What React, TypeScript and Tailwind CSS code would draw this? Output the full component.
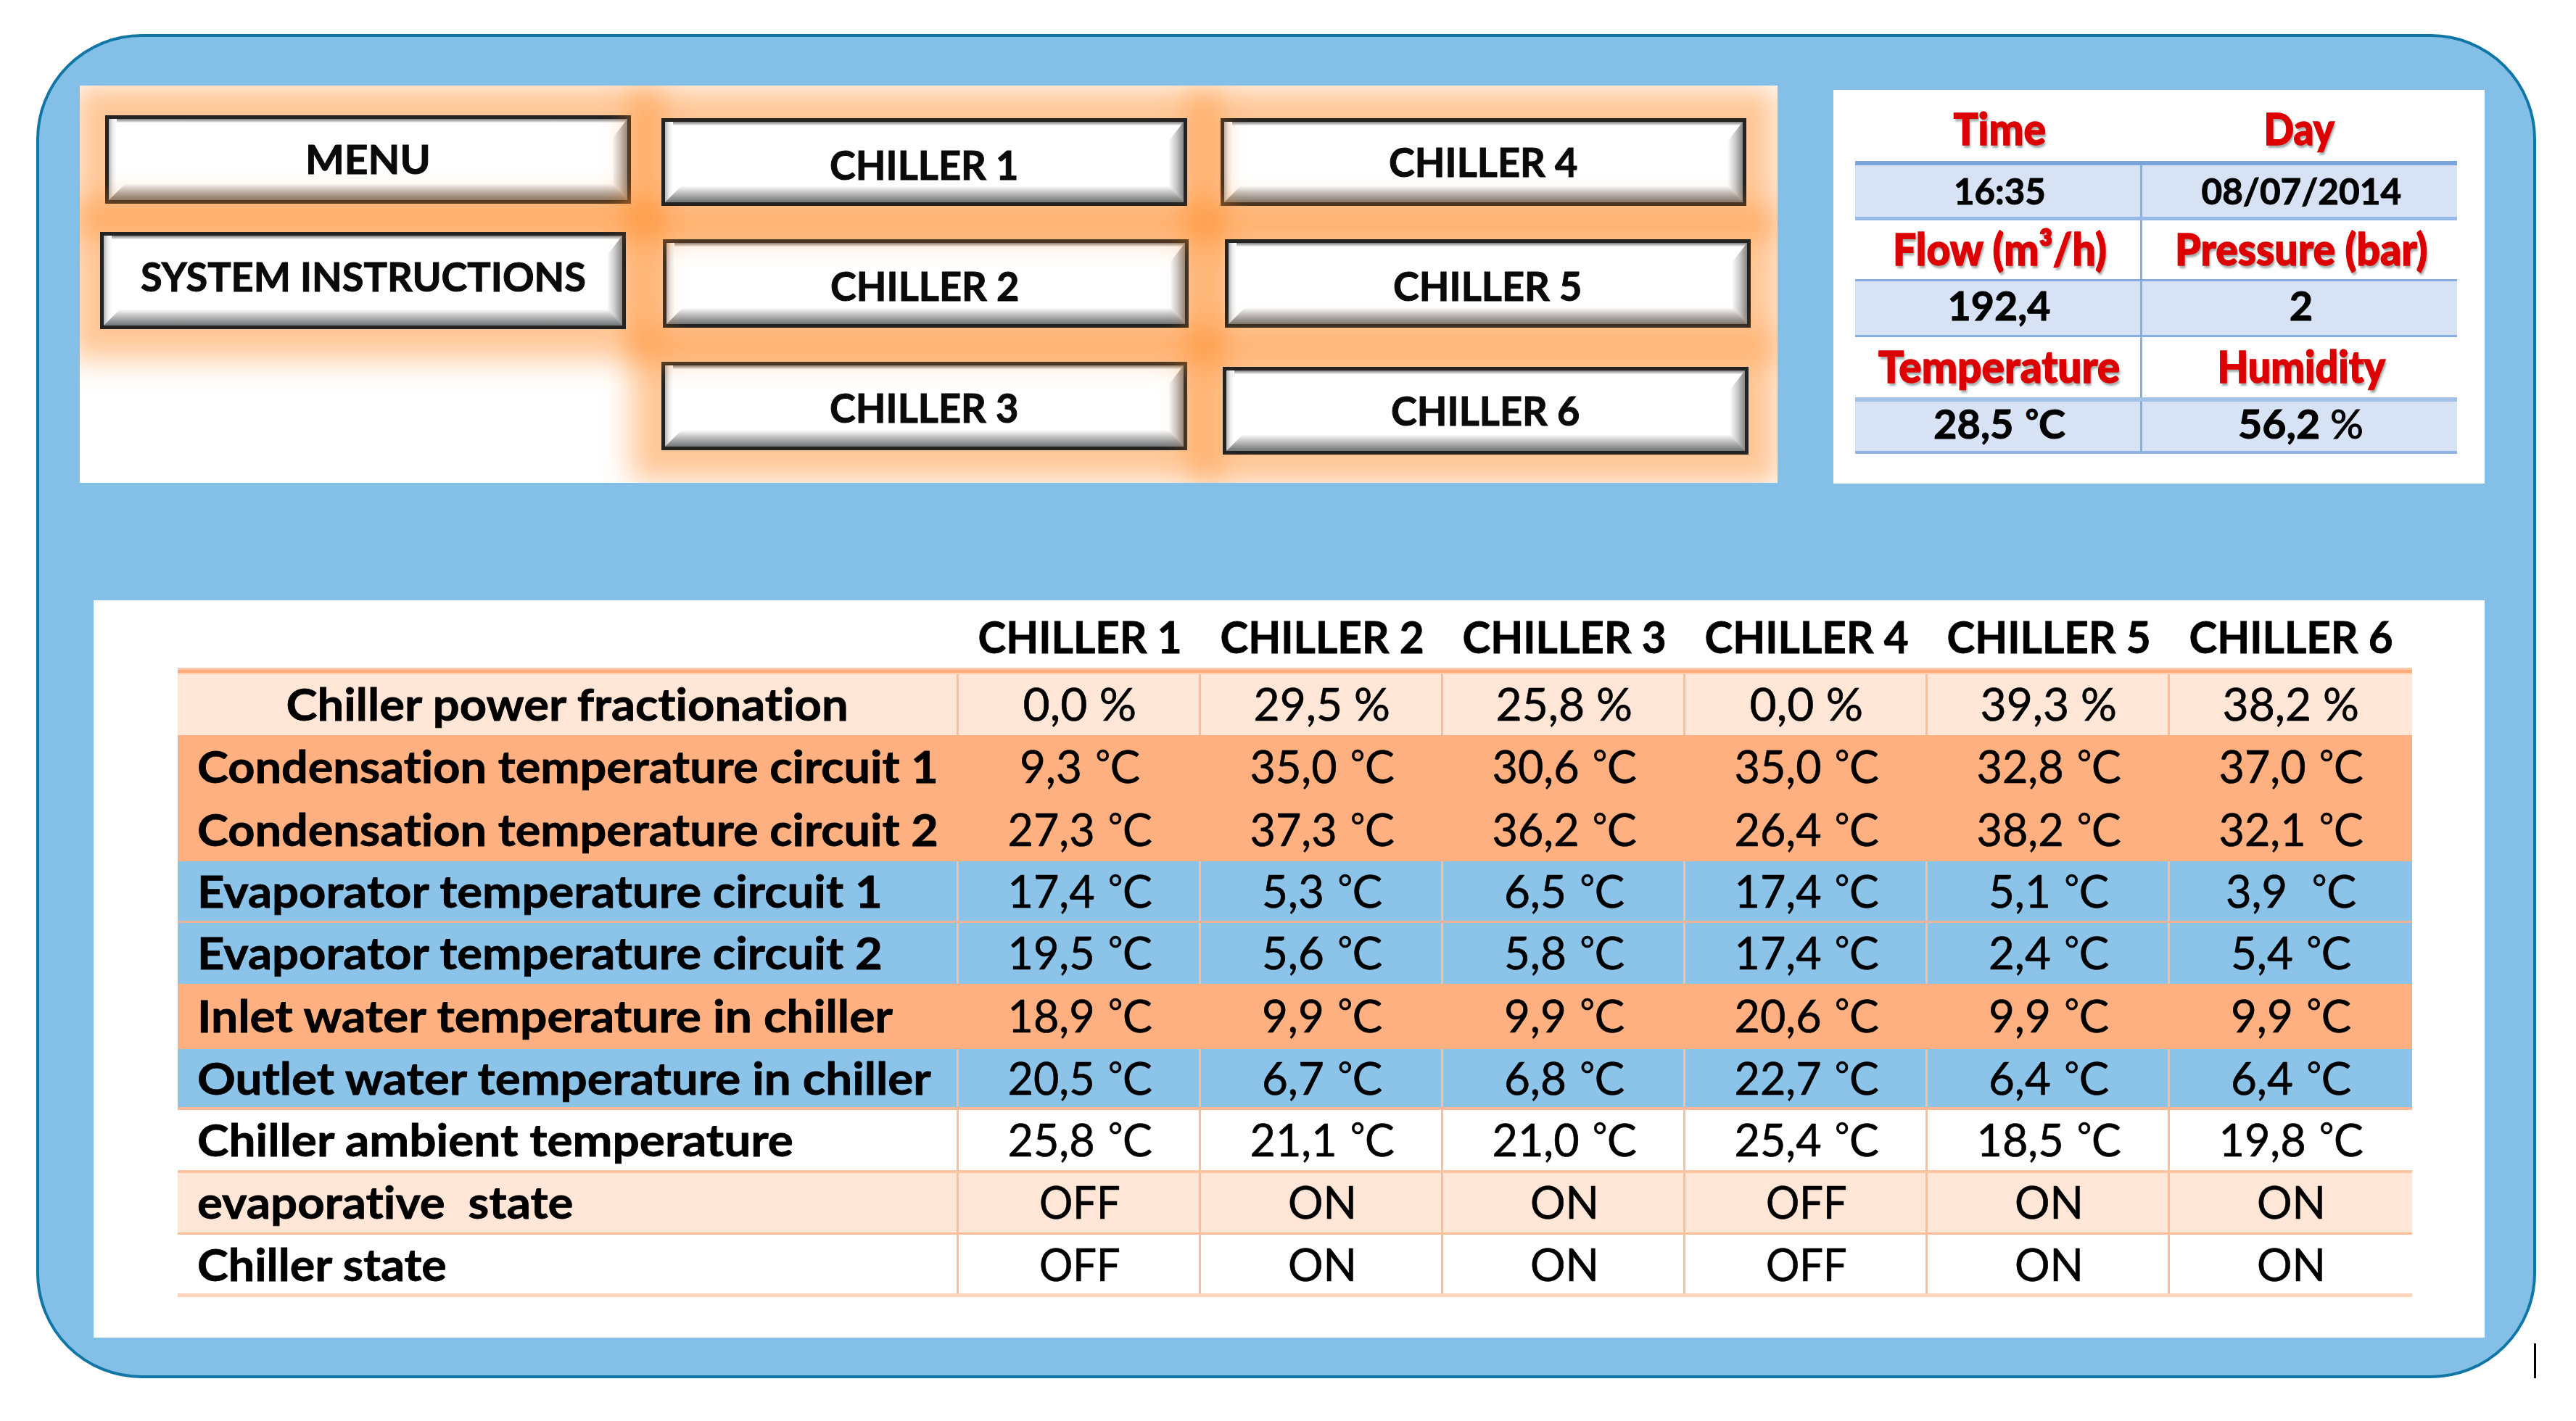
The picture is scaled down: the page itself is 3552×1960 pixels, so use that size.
import { useLayoutEffect, useRef, useState } from "react";
import type { ReactNode } from "react";

type FitProps = {
  width: number;
  className?: string;
  start?: boolean;
  children: ReactNode;
};

// Sets a piece of text to an exact width by stretching it horizontally.
function Fit({ width, className = "", start = false, children }: FitProps) {
  const ref = useRef<HTMLSpanElement>(null);
  const [scale, setScale] = useState(1);
  useLayoutEffect(() => {
    if (ref.current) setScale(width / ref.current.offsetWidth);
  }, [width]);
  return (
    <span
      className={`inline-flex ${start ? "justify-start" : "justify-center"}`}
      style={{ width }}
    >
      <span
        ref={ref}
        className={`block shrink-0 whitespace-pre ${start ? "origin-left" : "origin-center"} ${className}`}
        style={{ transform: `scaleX(${scale})` }}
      >
        {children}
      </span>
    </span>
  );
}

// A reading whose degree sign is set small and close to the unit letter.
function Reading({ value }: { value: string }) {
  const [number, unit] = value.split("°");
  if (unit === undefined) return <>{value}</>;
  return (
    <>
      {number}
      <span className="relative -top-[0.21em] ml-[0.06em] text-[0.78em] leading-none">°</span>
      {unit}
    </>
  );
}

function BevelButton({
  label,
  width,
  className,
  textClass = "",
}: {
  label: string;
  width: number;
  className: string;
  textClass?: string;
}) {
  return (
    <button
      className={`relative flex w-[725px] shrink-0 items-center justify-center border-[5px] border-[#242321] bg-white shadow-[0_0_38px_42px_rgba(255,141,42,0.49)] ${className}`}
    >
      <span className="absolute inset-x-0 top-0 h-[5px] bg-linear-to-b from-[#7b7d7e] to-[#f4f4f4]" />
      <span className="absolute inset-y-0 left-0 w-[11px] bg-linear-to-r from-[#b4b6b8] via-[#ececec] to-white" />
      <span className="absolute inset-y-0 right-0 w-[20px] bg-linear-to-l from-[#868686] via-[#c9c9c9] to-[#fafafa] [clip-path:polygon(100%_0,0_26px,0_100%,100%_100%)]" />
      <span className="absolute inset-x-0 bottom-0 h-[22px] bg-linear-to-t from-[#717576] via-[#b4b4b4] to-[#fafafa] [clip-path:polygon(22px_0,calc(100%-20px)_0,100%_100%,0_100%)]" />
      <Fit
        width={width}
        className={`text-[55px] leading-none font-bold text-[#0a0a0a] [-webkit-text-stroke:1px_#0a0a0a] ${textClass}`}
      >
        {label}
      </Fit>
    </button>
  );
}

function ButtonPanel() {
  return (
    <div className="isolate flex h-[548px] w-[2341px] items-start overflow-hidden bg-white">
      <div className="ml-[28px] flex w-[732px] flex-col">
        <BevelButton label="MENU" width={173} className="z-0 mt-[41px] ml-[7px] h-[122px]" textClass="-translate-y-[1px]" />
        <BevelButton
          label="SYSTEM INSTRUCTIONS"
          width={614}
          className="z-30 mt-[39px] h-[134px]"
          textClass="-translate-y-[6px]"
        />
      </div>
      <div className="ml-[42px] flex w-[727px] flex-col">
        <BevelButton label="CHILLER 1" width={260} className="z-30 mt-[45px] h-[121px] pt-[7px]" />
        <BevelButton label="CHILLER 2" width={260} className="z-20 mt-[46px] ml-[2px] h-[122px] pt-[7px] pr-[3px]" />
        <BevelButton label="CHILLER 3" width={260} className="z-10 mt-[47px] h-[122px] pt-[4px]" />
      </div>
      <div className="ml-[44px] flex w-[731px] flex-col">
        <BevelButton label="CHILLER 4" width={260} className="z-10 mt-[45px] h-[121px]" />
        <BevelButton label="CHILLER 5" width={260} className="z-30 mt-[46px] ml-[6px] h-[122px] pt-[7px]" />
        <BevelButton label="CHILLER 6" width={260} className="z-40 mt-[54px] ml-[3px] h-[121px]" />
      </div>
    </div>
  );
}

const redText =
  "-translate-y-[2px] text-[61px] leading-none font-black text-[#dc0000] [-webkit-text-stroke:1.4px_#dc0000] [text-shadow:2px_4px_3px_rgba(70,90,90,0.5)]";
const infoText =
  "-translate-y-[4px] text-[56px] leading-none font-bold text-black [-webkit-text-stroke:1px_#000]";
const dateText =
  "-translate-y-[1px] text-[50px] leading-none font-bold text-black [-webkit-text-stroke:1px_#000]";

type InfoCell = { width: number; text: ReactNode };
const infoRows: { cells: [InfoCell, InfoCell]; text: string; row: string; cell: string }[] = [
  {
    cells: [
      { width: 128, text: "Time" },
      { width: 97, text: "Day" },
    ],
    text: redText,
    row: "h-[98px] pt-[11px]",
    cell: "pr-[3px]",
  },
  {
    cells: [
      { width: 127, text: "16:35" },
      { width: 276, text: "08/07/2014" },
    ],
    text: dateText,
    row: "h-[82px] border-t-[6px] border-b-[5px] border-t-[#7ba5da] border-b-[#97b9e6] bg-[#d7e3f4]",
    cell: "border-[#88aee2]",
  },
  {
    cells: [
      { width: 295, text: "Flow (m³/h)" },
      { width: 348, text: "Pressure (bar)" },
    ],
    text: redText,
    row: "h-[81px]",
    cell: "border-[#88aee2]",
  },
  {
    cells: [
      { width: 142, text: "192,4" },
      { width: 32, text: "2" },
    ],
    text: infoText,
    row: "h-[80px] border-y-[3px] border-[#86ade1] bg-[#d7e3f4]",
    cell: "border-[#88aee2]",
  },
  {
    cells: [
      { width: 333, text: "Temperature" },
      { width: 232, text: "Humidity" },
    ],
    text: redText,
    row: "h-[83px]",
    cell: "border-[#88aee2]",
  },
  {
    cells: [
      { width: 182, text: <Reading value="28,5 °C" /> },
      {
        width: 173,
        text: (
          <>
            56,2 <span className="font-normal">%</span>
          </>
        ),
      },
    ],
    text: infoText,
    row: "h-[78px] border-t-[6px] border-b-[4px] border-t-[#a3c0e6] border-b-[#8fb3e3] bg-[#d7e3f4]",
    cell: "border-[#88aee2]",
  },
];

function InfoPanel() {
  return (
    <div className="mt-[6px] ml-[77px] h-[543px] w-[898px] bg-white pl-[30px]">
      {infoRows.map((r, i) => (
        <div key={i} className={`flex w-[830px] ${r.row}`}>
          <div className="flex w-[393px] items-center justify-center pl-[5px]">
            <Fit width={r.cells[0].width} className={r.text}>
              {r.cells[0].text}
            </Fit>
          </div>
          <div
            className={`flex w-[437px] items-center justify-center pl-[4px] ${r.cell} ${i > 0 ? "border-l-[3px]" : ""}`}
          >
            <Fit width={r.cells[1].width} className={r.text}>
              {r.cells[1].text}
            </Fit>
          </div>
        </div>
      ))}
    </div>
  );
}

const peach = "bg-[#ffe6d7]";
const orange = "bg-[#ffb081]";
const blue = "bg-[#8bc3e9]";

const rows: { label: string; width: number; center?: boolean; row: string; lines: boolean; values: string[] }[] = [
  {
    label: "Chiller power fractionation",
    width: 775,
    center: true,
    row: `h-[84px] [&>div]:pb-[3px] ${peach}`,
    lines: true,
    values: ["0,0 %", "29,5 %", "25,8 %", "0,0 %", "39,3 %", "38,2 %"],
  },
  {
    label: "Condensation temperature circuit 1",
    width: 1022,
    row: `h-[86px] ${orange}`,
    lines: false,
    values: ["9,3 °C", "35,0 °C", "30,6 °C", "35,0 °C", "32,8 °C", "37,0 °C"],
  },
  {
    label: "Condensation temperature circuit 2",
    width: 1022,
    row: `h-[88px] ${orange}`,
    lines: false,
    values: ["27,3 °C", "37,3 °C", "36,2 °C", "26,4 °C", "38,2 °C", "32,1 °C"],
  },
  {
    label: "Evaporator temperature circuit 1",
    width: 945,
    row: `h-[85px] border-b-[3px] border-[#f2b394] ${blue}`,
    lines: true,
    values: ["17,4 °C", "5,3 °C", "6,5 °C", "17,4 °C", "5,1 °C", "3,9  °C"],
  },
  {
    label: "Evaporator temperature circuit 2",
    width: 945,
    row: `h-[84px] [&>div]:pb-[2px] ${blue}`,
    lines: true,
    values: ["19,5 °C", "5,6 °C", "5,8 °C", "17,4 °C", "2,4 °C", "5,4 °C"],
  },
  {
    label: "Inlet water temperature in chiller",
    width: 959,
    row: `h-[90px] [&>div]:pb-[3px] ${orange}`,
    lines: false,
    values: ["18,9 °C", "9,9 °C", "9,9 °C", "20,6 °C", "9,9 °C", "9,9 °C"],
  },
  {
    label: "Outlet water temperature in chiller",
    width: 1012,
    row: `h-[84px] border-b-[4px] border-[#f9b793] ${blue}`,
    lines: true,
    values: ["20,5 °C", "6,7 °C", "6,8 °C", "22,7 °C", "6,4 °C", "6,4 °C"],
  },
  {
    label: "Chiller ambient temperature",
    width: 822,
    row: "h-[87px] border-b-[4px] border-[#ffc5a2] bg-white [&>div]:pb-[2px]",
    lines: true,
    values: ["25,8 °C", "21,1 °C", "21,0 °C", "25,4 °C", "18,5 °C", "19,8 °C"],
  },
  {
    label: "evaporative  state",
    width: 518,
    row: `h-[85px] border-b-[3px] border-[#ffbe97] [&>div]:pb-[2px] ${peach}`,
    lines: true,
    values: ["OFF", "ON", "ON", "OFF", "ON", "ON"],
  },
  {
    label: "Chiller state",
    width: 344,
    row: "h-[86px] border-b-[5px] border-[#ffd3b9] bg-white",
    lines: true,
    values: ["OFF", "ON", "ON", "OFF", "ON", "ON"],
  },
];

function valueWidth(v: string) {
  if (v === "ON") return 95;
  if (v === "OFF") return 112;
  if (v.endsWith("%")) return v.length === 6 ? 189 : 157;
  if (v.includes("  ")) return 180;
  return v.length === 7 ? 199 : 166;
}

const boldText =
  "-translate-y-[1px] text-[62px] leading-none font-bold text-black [-webkit-text-stroke:0.8px_#000]";

function DataPanel() {
  return (
    <div className="mt-[161px] ml-[19px] h-[1017px] w-[3297px] bg-white pl-[116px]">
      <div className="flex h-[93px] w-[3081px] pt-[6px] pl-[1074px]">
        {[1, 2, 3, 4, 5, 6].map((n) => (
          <div key={n} className="flex w-[334px] shrink-0 items-center justify-center pl-[6px]">
            <Fit width={281} className={boldText}>
              CHILLER {n}
            </Fit>
          </div>
        ))}
      </div>
      <div className="h-[9px] w-[3081px] border-t-[3px] border-b-2 border-t-[#ffc8a7] border-b-[#ffcfb2] bg-[#ffab7b]" />
      {rows.map((r) => (
        <div key={r.label} className={`flex w-[3081px] ${r.row}`}>
          <div className={`flex w-[1074px] shrink-0 items-center ${r.center ? "justify-center" : "pl-[27px]"}`}>
            <Fit width={r.width} start={!r.center} className={boldText}>
              {r.label}
            </Fit>
          </div>
          {r.values.map((v, i) => (
            <div
              key={i}
              className={`flex w-[334px] shrink-0 items-center justify-center border-l-[3px] pl-[3px] last:w-[337px] last:pr-[3px] ${r.lines ? "border-[#ffbe99]" : "border-transparent"}`}
            >
              <Fit
                width={valueWidth(v)}
                className="-translate-y-[1px] text-[62px] leading-none text-black [-webkit-text-stroke:0.6px_#000]"
              >
                <Reading value={v} />
              </Fit>
            </div>
          ))}
        </div>
      ))}
    </div>
  );
}

export default function App() {
  return (
    <main className="relative h-[1960px] w-[3552px] overflow-hidden bg-white pt-[47px] pl-[50px] font-['Lato',sans-serif] [font-variant-ligatures:none]">
      <section className="h-[1854px] w-[3447px] rounded-[145px] border-4 border-[#0f76a6] bg-[#84bfe8] pt-[67px] pl-[56px]">
        <div className="flex items-start">
          <ButtonPanel />
          <InfoPanel />
        </div>
        <DataPanel />
      </section>
      <span className="absolute top-[1853px] left-[3494px] h-[48px] w-[3px] bg-black" />
    </main>
  );
}
